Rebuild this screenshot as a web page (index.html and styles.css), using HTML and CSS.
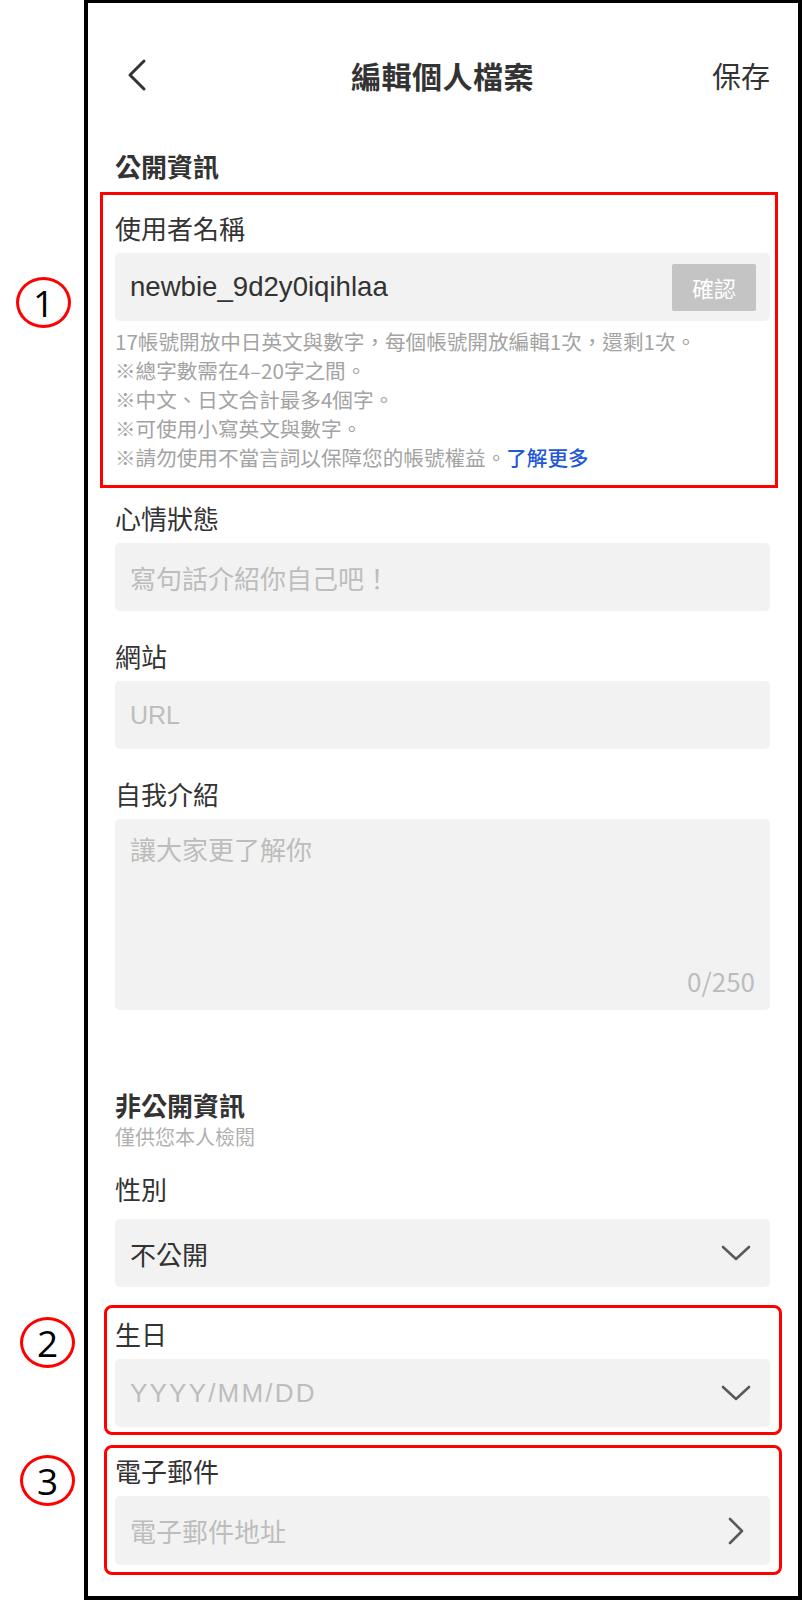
FILE: index.html
```html
<!DOCTYPE html>
<html lang="zh-Hant">
<head>
<meta charset="utf-8">
<title>編輯個人檔案</title>
<link rel="stylesheet" href="styles.css">
</head>
<body>
<div class="phone">
  <header class="topbar">
    <span class="back">
      <svg width="22" height="34" viewBox="0 0 22 34"><path d="M18 3 L4 17 L18 31" fill="none" stroke="#333" stroke-width="3" stroke-linecap="round" stroke-linejoin="round"/></svg>
    </span>
    <h1 class="title">編輯個人檔案</h1>
    <span class="save">保存</span>
  </header>

  <h2 class="section-title">公開資訊</h2>

  <div class="mark mark-square mark-1">
    <span class="badge">1</span>
    <div class="label">使用者名稱</div>
    <div class="input input-user">
      <span class="value">newbie_9d2y0iqihlaa</span>
      <span class="confirm">確認</span>
    </div>
    <div class="help">
      <p>17帳號開放中日英文與數字，每個帳號開放編輯1次，還剩1次。</p>
      <p>※總字數需在4–20字之間。</p>
      <p>※中文、日文合計最多4個字。</p>
      <p>※可使用小寫英文與數字。</p>
      <p>※請勿使用不當言詞以保障您的帳號權益。<a class="link">了解更多</a></p>
    </div>
  </div>

  <div class="field field-first">
    <div class="label">心情狀態</div>
    <div class="input"><span class="ph">寫句話介紹你自己吧！</span></div>
  </div>

  <div class="field">
    <div class="label">網站</div>
    <div class="input"><span class="ph ph-latin">URL</span></div>
  </div>

  <div class="field">
    <div class="label">自我介紹</div>
    <div class="textarea">
      <span class="ph">讓大家更了解你</span>
      <span class="counter">0/250</span>
    </div>
  </div>

  <h2 class="section-title private">非公開資訊</h2>
  <div class="subtitle">僅供您本人檢閱</div>

  <div class="field field-gender">
    <div class="label label-gender">性別</div>
    <div class="input select">
      <span class="value-cjk">不公開</span>
      <svg class="chev-down" width="32" height="18" viewBox="0 0 32 18"><path d="M3 3 L16 15 L29 3" fill="none" stroke="#5a5a5a" stroke-width="2.6" stroke-linecap="round" stroke-linejoin="round"/></svg>
    </div>
  </div>

  <div class="mark mark-round mark-2">
    <span class="badge">2</span>
    <div class="label">生日</div>
    <div class="input select">
      <span class="ph ph-latin ph-date">YYYY/MM/DD</span>
      <svg class="chev-down" width="32" height="18" viewBox="0 0 32 18"><path d="M3 3 L16 15 L29 3" fill="none" stroke="#5a5a5a" stroke-width="2.6" stroke-linecap="round" stroke-linejoin="round"/></svg>
    </div>
  </div>

  <div class="mark mark-round mark-3">
    <span class="badge">3</span>
    <div class="label">電子郵件</div>
    <div class="input select">
      <span class="ph">電子郵件地址</span>
      <svg class="chev-right" width="19" height="30" viewBox="0 0 19 30"><path d="M3 3 L15 15 L3 27" fill="none" stroke="#5a5a5a" stroke-width="2.6" stroke-linecap="round" stroke-linejoin="round"/></svg>
    </div>
  </div>
</div>
</body>
</html>
```

FILE: styles.css
```css
* { box-sizing: border-box; }
html, body { margin: 0; padding: 0; background: #fff; }
body {
  width: 802px;
  font-family: "Noto Sans CJK TC", "Noto Sans", sans-serif;
  color: #333;
}
p { margin: 0; }
h1, h2 { margin: 0; font-weight: 700; }

.phone {
  margin-left: 84px;
  width: 718px;
  height: 1600px;
  border: 4px solid #000;
  border-top-width: 3px;
  padding: 0 28px 0 27px;
  background: #fff;
}

.topbar {
  margin-top: 36px;
  height: 72px;
  display: grid;
  grid-template-columns: 1fr auto 1fr;
  align-items: center;
}
.back { display: flex; align-items: center; padding-left: 11px; }
.back svg { display: block; }
.title {
  font-size: 30px;
  line-height: 40px;
  color: #333;
  letter-spacing: 0.5px;
}
.save {
  justify-self: end;
  font-size: 29px;
  line-height: 40px;
  color: #333;
}

.section-title {
  margin-top: 37px;
  font-size: 26px;
  line-height: 36px;
  color: #333;
}
.section-title.private { margin-top: 77px; }
.subtitle {
  font-size: 20px;
  line-height: 28px;
  color: #b0b0b0;
}

.label {
  font-size: 26px;
  line-height: 36px;
  color: #333;
  margin-bottom: 7px;
}

.input {
  height: 68px;
  background: #f2f2f2;
  border-radius: 5px;
  display: flex;
  align-items: center;
  padding: 0 14px 0 15px;
}
.value {
  font-family: "Liberation Sans", "Noto Sans CJK TC", sans-serif;
  font-size: 27.6px;
  color: #333;
  flex: 1;
}
.value-cjk {
  font-size: 26px;
  color: #333;
  flex: 1;
}
.ph {
  font-size: 26px;
  color: #bdbdbd;
  flex: 1;
}
.ph-latin {
  font-family: "Liberation Sans", "Noto Sans CJK TC", sans-serif;
  font-size: 25px;
}
.ph-date { font-size: 26px; letter-spacing: 2.2px; }
.confirm {
  width: 84px;
  height: 47px;
  background: #c4c4c4;
  color: #fff;
  font-size: 22px;
  display: flex;
  align-items: center;
  justify-content: center;
  border-radius: 2px;
}
.select { padding-right: 18px; }
.chev-down, .chev-right { display: block; flex: none; }
.chev-right { margin-right: 6px; }

.help {
  margin-top: 6px;
  font-size: 20.6px;
  line-height: 29px;
  color: #a3a3a3;
  white-space: nowrap;
}
.link { color: #2457d6; font-weight: 500; }

.field { margin-top: 27px; }
.field-first { margin-top: 12px; }
.field-gender { margin-top: 20px; }
.label-gender { margin-bottom: 12px; }

.textarea {
  position: relative;
  height: 191px;
  background: #f2f2f2;
  border-radius: 5px;
  padding: 12px 15px;
}
.textarea .ph { display: block; line-height: 36px; }
.counter {
  position: absolute;
  right: 15px;
  bottom: 12px;
  font-size: 26px;
  line-height: 34px;
  color: #bdbdbd;
}

/* annotation overlays */
.mark {
  position: relative;
  border: 3px solid #f00;
}
.mark-square {
  margin: 8px -8px 0 -15px;
  padding: 15px 5px 13px 12px;
}
.mark-round {
  border-radius: 8px;
  margin-left: -11px;
  margin-right: -12px;
  padding-left: 8px;
  padding-right: 9px;
}
.mark-2 { margin-top: 18px; padding-top: 8px; padding-bottom: 5px; }
.mark-3 { margin-top: 10px; padding-top: 5px; padding-bottom: 7px; }
.mark-3 .label { margin-bottom: 7px; }
.mark-3 .input { height: 69px; }

.badge {
  position: absolute;
  left: -87px;
  width: 55px;
  height: 51px;
  border: 3px solid #f00;
  border-radius: 50%;
  display: flex;
  align-items: center;
  justify-content: center;
  font-family: "Open Sans", "Liberation Sans", sans-serif;
  font-size: 37px;
  line-height: 1;
  color: #000;
  background: #fff;
}
.mark-1 .badge { top: 82px; left: -87px; }
.mark-2 .badge { top: 9px; left: -87px; }
.mark-3 .badge { top: 7px; left: -87px; }
```
